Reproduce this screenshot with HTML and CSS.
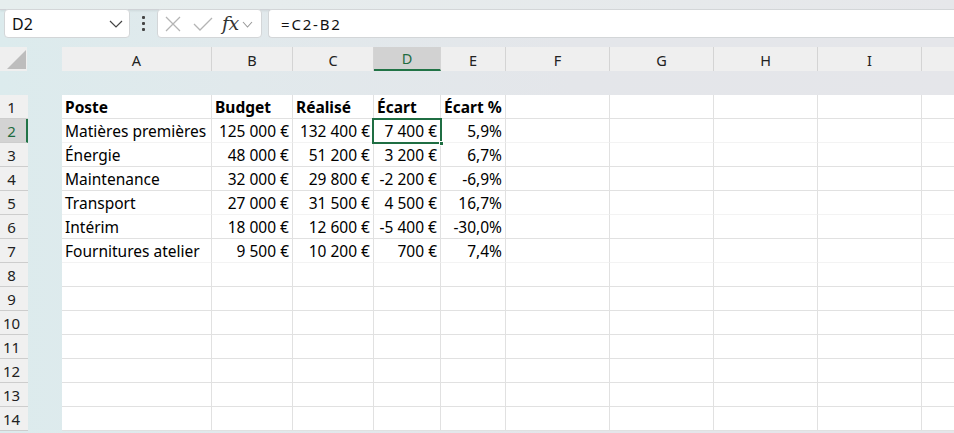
FILE: index.html
```html
<!DOCTYPE html>
<html lang="fr">
<head>
<meta charset="utf-8">
<title>Feuille</title>
<link rel="stylesheet" href="styles.css">
</head>
<body>
<div class="app">
  <div class="topstrip"></div>
  <div class="fbar">
    <div class="namebox">
      <span class="nb-text">D2</span>
      <svg class="chev" width="14" height="8" viewBox="0 0 14 8"><path d="M1 1 L7 7 L13 1" fill="none" stroke="#444" stroke-width="1.2"/></svg>
    </div>
    <div class="dots"><span></span><span></span><span></span></div>
    <div class="fxbox">
      <svg class="ic-x" width="16" height="16" viewBox="0 0 16 16"><path d="M1 1 L15 15 M15 1 L1 15" stroke="#b4b4b4" stroke-width="1.3" fill="none"/></svg>
      <svg class="ic-ok" width="20" height="16" viewBox="0 0 20 16"><path d="M1 8 L7 14 L19 2" stroke="#b4b4b4" stroke-width="1.3" fill="none"/></svg>
      <span class="fx">fx</span>
      <svg class="chev2" width="11" height="7" viewBox="0 0 11 7"><path d="M1 1 L5.5 6 L10 1" fill="none" stroke="#999" stroke-width="1.1"/></svg>
    </div>
    <div class="finput">=C2-B2</div>
  </div>

  <div class="sheet">
    <div class="colheads">
      <div class="corner"><div class="tri"></div></div>
      <div class="ch w-a">A</div>
      <div class="ch w-b">B</div>
      <div class="ch w-c">C</div>
      <div class="ch w-d sel">D</div>
      <div class="ch w-e">E</div>
      <div class="ch w-f">F</div>
      <div class="ch w-f">G</div>
      <div class="ch w-f">H</div>
      <div class="ch w-f">I</div>
      <div class="ch w-j"></div>
    </div>

    <div class="grid">
      <div class="row">
        <div class="rh">1</div>
        <div class="c w-a b">Poste</div><div class="c w-b b">Budget</div><div class="c w-c b">Réalisé</div><div class="c w-d b">Écart</div><div class="c w-e b">Écart %</div>
        <div class="c w-f"></div><div class="c w-f"></div><div class="c w-f"></div><div class="c w-f"></div><div class="c w-j"></div>
      </div>
      <div class="row faint">
        <div class="rh sel">2</div>
        <div class="c w-a">Matières premières</div><div class="c w-b n">125 000 €</div><div class="c w-c n">132 400 €</div><div class="c w-d n">7 400 €</div><div class="c w-e n">5,9%</div>
        <div class="c w-f"></div><div class="c w-f"></div><div class="c w-f"></div><div class="c w-f"></div><div class="c w-j"></div>
      </div>
      <div class="row">
        <div class="rh">3</div>
        <div class="c w-a">Énergie</div><div class="c w-b n">48 000 €</div><div class="c w-c n">51 200 €</div><div class="c w-d n">3 200 €</div><div class="c w-e n">6,7%</div>
        <div class="c w-f"></div><div class="c w-f"></div><div class="c w-f"></div><div class="c w-f"></div><div class="c w-j"></div>
      </div>
      <div class="row">
        <div class="rh">4</div>
        <div class="c w-a">Maintenance</div><div class="c w-b n">32 000 €</div><div class="c w-c n">29 800 €</div><div class="c w-d n">-2 200 €</div><div class="c w-e n">-6,9%</div>
        <div class="c w-f"></div><div class="c w-f"></div><div class="c w-f"></div><div class="c w-f"></div><div class="c w-j"></div>
      </div>
      <div class="row faint">
        <div class="rh">5</div>
        <div class="c w-a">Transport</div><div class="c w-b n">27 000 €</div><div class="c w-c n">31 500 €</div><div class="c w-d n">4 500 €</div><div class="c w-e n">16,7%</div>
        <div class="c w-f"></div><div class="c w-f"></div><div class="c w-f"></div><div class="c w-f"></div><div class="c w-j"></div>
      </div>
      <div class="row">
        <div class="rh">6</div>
        <div class="c w-a">Intérim</div><div class="c w-b n">18 000 €</div><div class="c w-c n">12 600 €</div><div class="c w-d n">-5 400 €</div><div class="c w-e n">-30,0%</div>
        <div class="c w-f"></div><div class="c w-f"></div><div class="c w-f"></div><div class="c w-f"></div><div class="c w-j"></div>
      </div>
      <div class="row faint">
        <div class="rh">7</div>
        <div class="c w-a">Fournitures atelier</div><div class="c w-b n">9 500 €</div><div class="c w-c n">10 200 €</div><div class="c w-d n">700 €</div><div class="c w-e n">7,4%</div>
        <div class="c w-f"></div><div class="c w-f"></div><div class="c w-f"></div><div class="c w-f"></div><div class="c w-j"></div>
      </div>
      <div class="row"><div class="rh">8</div><div class="c w-a"></div><div class="c w-b"></div><div class="c w-c"></div><div class="c w-d"></div><div class="c w-e"></div><div class="c w-f"></div><div class="c w-f"></div><div class="c w-f"></div><div class="c w-f"></div><div class="c w-j"></div></div>
      <div class="row"><div class="rh">9</div><div class="c w-a"></div><div class="c w-b"></div><div class="c w-c"></div><div class="c w-d"></div><div class="c w-e"></div><div class="c w-f"></div><div class="c w-f"></div><div class="c w-f"></div><div class="c w-f"></div><div class="c w-j"></div></div>
      <div class="row"><div class="rh">10</div><div class="c w-a"></div><div class="c w-b"></div><div class="c w-c"></div><div class="c w-d"></div><div class="c w-e"></div><div class="c w-f"></div><div class="c w-f"></div><div class="c w-f"></div><div class="c w-f"></div><div class="c w-j"></div></div>
      <div class="row"><div class="rh">11</div><div class="c w-a"></div><div class="c w-b"></div><div class="c w-c"></div><div class="c w-d"></div><div class="c w-e"></div><div class="c w-f"></div><div class="c w-f"></div><div class="c w-f"></div><div class="c w-f"></div><div class="c w-j"></div></div>
      <div class="row"><div class="rh">12</div><div class="c w-a"></div><div class="c w-b"></div><div class="c w-c"></div><div class="c w-d"></div><div class="c w-e"></div><div class="c w-f"></div><div class="c w-f"></div><div class="c w-f"></div><div class="c w-f"></div><div class="c w-j"></div></div>
      <div class="row"><div class="rh">13</div><div class="c w-a"></div><div class="c w-b"></div><div class="c w-c"></div><div class="c w-d"></div><div class="c w-e"></div><div class="c w-f"></div><div class="c w-f"></div><div class="c w-f"></div><div class="c w-f"></div><div class="c w-j"></div></div>
      <div class="row"><div class="rh">14</div><div class="c w-a"></div><div class="c w-b"></div><div class="c w-c"></div><div class="c w-d"></div><div class="c w-e"></div><div class="c w-f"></div><div class="c w-f"></div><div class="c w-f"></div><div class="c w-f"></div><div class="c w-j"></div></div>

      <div class="selbox"><div class="handle"></div></div>
    </div>
  </div>
</div>
</body>
</html>
```

FILE: styles.css
```css
* { box-sizing: border-box; }
html, body { margin: 0; padding: 0; }
body {
  width: 954px;
  height: 433px;
  overflow: hidden;
  background: linear-gradient(to right, #dcebed 0%, #e1e9ec 25%, #e4e6ea 60%, #e5e6ea 100%);
  font-family: "Noto Sans", sans-serif;
}
.app { width: 954px; }

.topstrip {
  height: 10px;
  background: linear-gradient(to right, #e6eeee, #e6e7ea);
  border-bottom: 1px solid #cfd2d6;
  box-shadow: 0 1px 2px rgba(0,0,0,0.08);
}

.fbar {
  display: flex;
  align-items: stretch;
  height: 29px;
  margin-top: -1px;
  padding-left: 4px;
}
.namebox {
  width: 126px;
  background: #fff;
  border: 1px solid #d3d6d8;
  border-radius: 4px;
  display: flex;
  align-items: center;
  justify-content: space-between;
  padding: 0 6px 0 7px;
}
.nb-text { font-size: 16px; color: #111; }
.chev { margin-top: 1px; }
.dots {
  width: 27px;
  display: flex;
  flex-direction: column;
  align-items: center;
  justify-content: center;
  gap: 3px;
}
.dots span { width: 3px; height: 3px; background: #444; border-radius: 1px; }
.fxbox {
  width: 105px;
  background: #fff;
  border: 1px solid #d3d6d8;
  border-radius: 4px;
  display: flex;
  align-items: center;
  padding-left: 7px;
}
.ic-x { margin-right: 12px; }
.ic-ok { margin-right: 9px; }
.fx {
  font-family: "DejaVu Serif", "Liberation Serif", serif;
  font-style: italic;
  font-size: 19px;
  color: #333;
  letter-spacing: -0.5px;
  margin-top: -2px;
}
.chev2 { margin-left: 3px; margin-top: 2px; }
.finput {
  flex: 1;
  margin-left: 6px;
  background: #fff;
  border: 1px solid #d3d6d8;
  border-right: none;
  border-radius: 4px 0 0 4px;
  font-size: 15px;
  letter-spacing: 1.8px;
  color: #111;
  display: flex;
  align-items: center;
  padding-left: 12px;
}

.sheet { margin-top: 9px; }
.colheads { display: flex; height: 24px; }
.corner {
  width: 27px;
  margin-right: 35px;
  background: #efefef;
  position: relative;
}
.tri {
  position: absolute;
  right: 1px;
  bottom: 2px;
  width: 0; height: 0;
  border-left: 19px solid transparent;
  border-bottom: 19px solid #bdbdbd;
}
.ch {
  background: #efefef;
  border-right: 1px solid #d4d4d4;
  font-size: 14.5px;
  color: #222;
  text-align: center;
  line-height: 24px;
  padding-top: 1px;
}
.ch.sel {
  background: #d2d2d2;
  color: #1e6b3f;
  border-bottom: 2px solid #217346;
  line-height: 21px;
}

.w-a { width: 150px; }
.w-b { width: 81px; }
.w-c { width: 81px; }
.w-d { width: 67px; }
.w-e { width: 65px; }
.w-f { width: 104px; }
.w-j { flex: 1; border-right: none !important; }

.grid { margin-top: 24px; position: relative; }
.row { display: flex; height: 24px; }
.rh {
  width: 28px;
  margin-right: 34px;
  background: #f0f0f0;
  border-bottom: 1px solid #cdcdcd;
  font-size: 15px;
  color: #222;
  text-align: center;
  padding-right: 5px;
  padding-top: 2px;
  line-height: 21px;
}
.rh.sel {
  background: #d3d3d3;
  color: #1e6b3f;
  border-right: 2px solid #217346;
  padding-right: 3px;
}
.c {
  background: #fff;
  border-right: 1px solid #e1e1e1;
  border-bottom: 1px solid #e1e1e1;
  font-size: 15.5px;
  color: #000;
  line-height: 21px;
  padding: 2px 3px 0 3px;
  white-space: nowrap;
}
.row.faint .c { border-bottom-color: #f3f3f3; }
.c.b { font-weight: 700; padding-left: 3px; }
.c.n { text-align: right; }

.selbox {
  position: absolute;
  left: 372px;
  top: 23px;
  width: 70px;
  height: 26px;
  border: 2px solid #1f6e43;
}
.handle {
  position: absolute;
  right: -4px;
  bottom: -4px;
  width: 5px;
  height: 5px;
  background: #1f6e43;
  border: 1px solid #fff;
}
```
